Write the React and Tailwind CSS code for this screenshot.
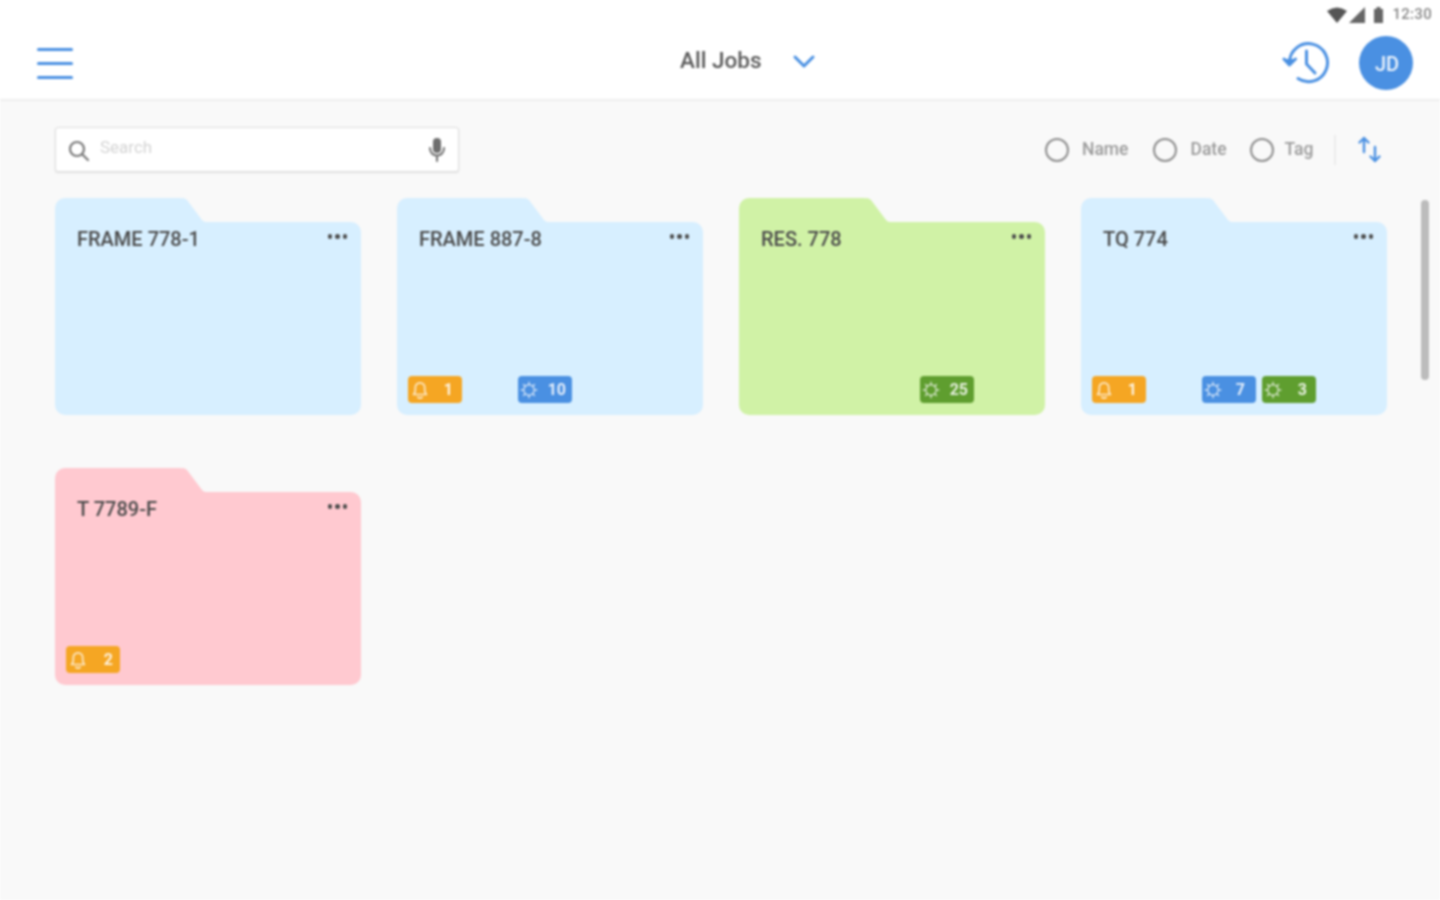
import React from "react";

const BLUE = "#4a90e2";

function Bell() {
  return (
    <svg width="18" height="20" viewBox="0 0 18 20" fill="none" stroke="#fff" strokeOpacity="0.75" strokeWidth="1.7" strokeLinejoin="round" strokeLinecap="round">
      <path d="M2.500 14.500c1.300-1.300 1.800-2.600 1.800-4.800V7.500a4.700 4.700 0 0 1 9.400 0v2.200c0 2.200.5 3.500 1.800 4.800z" />
      <path d="M6.800 17.300c1.200.8 3.200.8 4.400 0" />
    </svg>
  );
}

function Chip() {
  return (
    <svg width="18" height="18" viewBox="0 0 18 18" fill="none" stroke="#fff" strokeOpacity="0.7" strokeWidth="1.4" strokeLinecap="round">
      <circle cx="9" cy="9" r="5.200" />
      <path d="M9 1.200v2M9 14.800v2M1.200 9h2M14.800 9h2M3.500 3.500l1.400 1.400M13.100 13.100l1.400 1.400M3.500 14.500l1.400-1.400M13.100 4.900l1.400-1.400" />
    </svg>
  );
}

function Badge({ kind, n, tight }) {
  const bg = kind === "bell" ? "bg-[#f5a623]" : kind === "blue" ? "bg-[#4a90e2]" : "bg-[#5f9e2f]";
  const pad = n.length > 1 ? "pr-[6px]" : kind === "blue" ? "pr-[11px]" : tight ? "pr-[7px]" : "pr-[9px]";
  const padL = kind === "bell" ? "pl-[3px]" : "pl-[2px]";
  return (
    <div className={`w-[54px] h-[27px] rounded-[4px] flex items-center justify-between ${padL} ${pad} ${bg}`}>
      {kind === "bell" ? <Bell /> : <Chip />}
      <span className="text-[16px] font-bold text-white/85 leading-none">{n}</span>
    </div>
  );
}

function Folder({ name, color, fill, left, right }) {
  return (
    <div className="flex flex-col w-[306px] h-[217px]">
      <div className="flex h-[24px] shrink-0">
        <div className={`w-[131px] h-[24px] rounded-tl-[10px] rounded-tr-[6px] ${color}`} />
        <svg width="24" height="24" viewBox="0 0 24 24" className="-ml-[4px]">
          <path d="M0 0 Q3 0 5 2 L20 22 Q21.500 24 24 24 L0 24Z" fill={fill} />
        </svg>
      </div>
      <div className={`flex-1 rounded-b-[10px] rounded-tr-[10px] flex flex-col pl-[11px] pr-[13px] pb-[12px] ${color}`}>
        <div className="flex justify-between items-start pl-[11px] pr-[1px]">
          <span className="text-[20px] font-medium leading-[24px] mt-[5px] text-[#4a4a4a]">{name}</span>
          <div className="flex gap-[3px] mt-[12px]">
            <span className="w-[4.500px] h-[4.500px] rounded-full bg-[#4a4a4a]" />
            <span className="w-[4.500px] h-[4.500px] rounded-full bg-[#4a4a4a]" />
            <span className="w-[4.500px] h-[4.500px] rounded-full bg-[#4a4a4a]" />
          </div>
        </div>
        <div className="mt-auto h-[27px] flex">
          <div className="w-[110px] shrink-0">{left}</div>
          <div className="flex gap-[6px]">{right}</div>
        </div>
      </div>
    </div>
  );
}

function Radio({ label, gap }) {
  return (
    <div className={`flex items-center ${gap}`}>
      <span className="w-[24px] h-[24px] rounded-full border-2 border-[#8e8e8e]" />
      <span className="text-[17.500px] font-medium text-[#9b9b9b] leading-none">{label}</span>
    </div>
  );
}

const BLUEBG = "bg-[#d7efff]";

export default function App() {
  return (
    <div className="relative w-[1440px] h-[900px] overflow-hidden bg-[#f9f9f9] flex flex-col blur-[0.9px]" style={{ fontFamily: "Roboto, 'Liberation Sans', sans-serif" }}>
      <header className="h-[100px] shrink-0 bg-white border-b border-[#ececec] shadow-[0_1px_2px_rgba(0,0,0,0.04)] flex flex-col">
        <div className="h-[28px] flex items-center justify-end pr-[8px] pt-[1px]">
          <svg width="20" height="16" viewBox="0 0 20 16" className="-ml-[2px]"><path d="M0 4 Q10 -3 20 4 L10 16Z" fill="#555" /></svg>
          <svg width="16" height="16" viewBox="0 0 16 16" className="ml-[2px]"><path d="M16 0V16H0Z" fill="#666" /></svg>
          <svg width="11" height="16" viewBox="0 0 11 16" className="ml-[8px]"><path d="M3.500 0h4v2H10v14H1V2h2.500z" fill="#666" /></svg>
          <span className="text-[15px] tracking-[0.3px] font-medium leading-none text-[#888] ml-[8px]">12:30</span>
        </div>
        <div className="flex-1 relative flex items-center justify-between pl-[37px] pr-[27px]">
          <div className="flex flex-col gap-[11px] w-[36px] -mt-[1px]">
            <span className="h-[3px] bg-[#4a90e2] rounded-full" />
            <span className="h-[3px] bg-[#4a90e2] rounded-full" />
            <span className="h-[3px] bg-[#4a90e2] rounded-full" />
          </div>
          <div className="absolute left-[680px] top-[18px] flex items-center">
            <span className="text-[22.500px] font-medium leading-[28px] text-[#5a5a5a]">All Jobs</span>
            <svg width="24" height="16" viewBox="0 0 24 16" fill="none" stroke={BLUE} strokeWidth="3" strokeLinecap="round" strokeLinejoin="round" className="ml-[31px] mt-[3px]">
              <path d="M3 3 L12 12 L21 3" />
            </svg>
          </div>
          <div className="flex items-center gap-[29px] -mt-[2px]">
            <svg width="48" height="46" viewBox="0 0 48 46" fill="none" stroke={BLUE} strokeWidth="3" strokeLinecap="round" strokeLinejoin="round" className="mt-[3px]">
              <path d="M7.500 21A19 19 0 1 1 16 37.500" />
              <path d="M2 18 L7.500 24 L13.500 18" fill={BLUE} />
              <path d="M24.500 10 V23 L33 32" />
            </svg>
            <div className="w-[54px] h-[54px] rounded-full bg-[#4a90e2] flex items-center justify-center text-white/90 text-[20px] font-medium pl-[2px] pt-[2px]">JD</div>
          </div>
        </div>
      </header>

      <main className="relative flex-1 pl-[55px] pt-[27px]">
        <div className="flex items-center">
          <div className="w-[404px] h-[45px] bg-white border border-[#dedede] rounded-[3px] shadow-[0_1px_2px_rgba(0,0,0,0.1)] flex items-center pl-[11px] pr-[12px]">
            <svg width="24" height="24" viewBox="0 0 24 24" fill="none" stroke="#7a7a7a" strokeWidth="2.200" strokeLinecap="round" className="mt-[3px]">
              <circle cx="10" cy="10" r="7" />
              <path d="M15.500 15.500 L21 21" />
            </svg>
            <span className="ml-[9px] text-[17px] text-[#d4d4d4] -mt-[4px]">Search</span>
            <svg width="18" height="26" viewBox="0 0 18 26" fill="none" className="ml-auto">
              <rect x="5" y="1" width="8" height="15" rx="4" fill="#6e6e6e" />
              <path d="M2 11c0 4.500 3 7.500 7 7.500s7-3 7-7.500M9 18.500V24" stroke="#6e6e6e" strokeWidth="2" strokeLinecap="round" />
            </svg>
          </div>
          <div className="ml-[586px] flex items-center">
            <Radio label="Name" gap="gap-[13px]" />
            <div className="w-[25px]" />
            <Radio label="Date" gap="gap-[13px]" />
            <div className="w-[23px]" />
            <Radio label="Tag" gap="gap-[11px]" />
            <span className="w-[2px] h-[30px] bg-[#ececec] ml-[21px]" />
            <svg width="26" height="28" viewBox="0 0 26 28" fill="none" stroke={BLUE} strokeWidth="2.400" strokeLinecap="round" strokeLinejoin="round" className="ml-[21px]">
              <path d="M7 16V2M2.500 6.500 L7 2 L11.500 6.500" />
              <path d="M18 11V25M13.500 20.500 L18 25 L22.500 20.500" />
            </svg>
          </div>
        </div>

        <div className="grid grid-cols-[repeat(4,306px)] gap-x-[36px] gap-y-[53px] mt-[26px]">
          <Folder name="FRAME 778-1" color={BLUEBG} fill="#d7efff" />
          <Folder name="FRAME 887-8" color={BLUEBG} fill="#d7efff" left={<Badge kind="bell" n="1" />} right={<Badge kind="blue" n="10" />} />
          <Folder name="RES. 778" color="bg-[#d0f2a6]" fill="#d0f2a6" right={<div className="ml-[60px]"><Badge kind="green" n="25" /></div>} />
          <Folder name="TQ 774" color={BLUEBG} fill="#d7efff" left={<Badge kind="bell" n="1" />} right={<><Badge kind="blue" n="7" /><Badge kind="green" n="3" /></>} />
          <Folder name="T 7789-F" color="bg-[#ffc9d0]" fill="#ffc9d0" left={<Badge kind="bell" n="2" tight />} />
        </div>

        <div className="absolute left-[1421px] top-[100px] w-[8px] h-[180px] rounded-full bg-[#bcbcbc]" />
      </main>
    </div>
  );
}
